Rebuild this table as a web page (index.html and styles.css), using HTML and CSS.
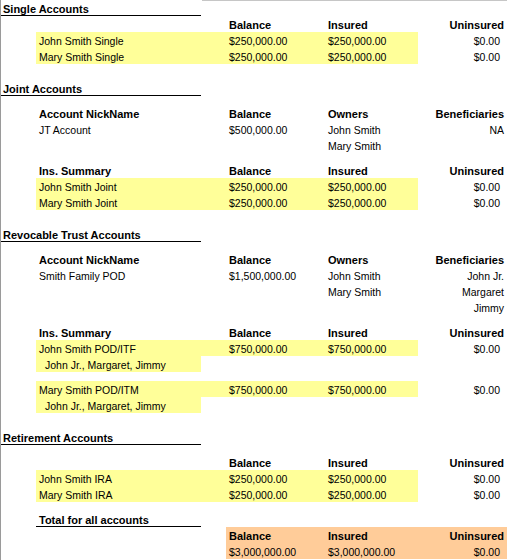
FILE: index.html
```html
<!DOCTYPE html>
<html>
<head>
<meta charset="utf-8">
<link rel="stylesheet" href="styles.css">
</head>
<body>
<div class="sheet">
  <div class="topline"></div>

  <div class="row"><div class="c title">Single Accounts</div></div>
  <div class="row">
    <div class="c d b">Balance</div><div class="c e b">Insured</div><div class="c f b r">Uninsured</div>
  </div>
  <div class="row">
    <div class="c bcol hl">John Smith Single</div><div class="c ccol hl"></div><div class="c d hl">$250,000.00</div><div class="c e hl">$250,000.00</div><div class="c f r money">$0.00</div>
  </div>
  <div class="row">
    <div class="c bcol hl">Mary Smith Single</div><div class="c ccol hl"></div><div class="c d hl">$250,000.00</div><div class="c e hl">$250,000.00</div><div class="c f r money">$0.00</div>
  </div>
  <div class="row"></div>

  <div class="row"><div class="c title">Joint Accounts</div></div>
  <div class="spacer"></div>
  <div class="row">
    <div class="c bcol b">Account NickName</div><div class="c d b">Balance</div><div class="c e b">Owners</div><div class="c f b r">Beneficiaries</div>
  </div>
  <div class="row">
    <div class="c bcol">JT Account</div><div class="c d">$500,000.00</div><div class="c e">John Smith</div><div class="c f r">NA</div>
  </div>
  <div class="row"><div class="c e">Mary Smith</div></div>
  <div class="spacer"></div>
  <div class="row">
    <div class="c bcol b">Ins. Summary</div><div class="c d b">Balance</div><div class="c e b">Insured</div><div class="c f b r">Uninsured</div>
  </div>
  <div class="row">
    <div class="c bcol hl">John Smith Joint</div><div class="c ccol hl"></div><div class="c d hl">$250,000.00</div><div class="c e hl">$250,000.00</div><div class="c f r money">$0.00</div>
  </div>
  <div class="row">
    <div class="c bcol hl">Mary Smith Joint</div><div class="c ccol hl"></div><div class="c d hl">$250,000.00</div><div class="c e hl">$250,000.00</div><div class="c f r money">$0.00</div>
  </div>
  <div class="row"></div>

  <div class="row"><div class="c title">Revocable Trust Accounts</div></div>
  <div class="spacer"></div>
  <div class="row">
    <div class="c bcol b">Account NickName</div><div class="c d b">Balance</div><div class="c e b">Owners</div><div class="c f b r">Beneficiaries</div>
  </div>
  <div class="row">
    <div class="c bcol">Smith Family POD</div><div class="c d">$1,500,000.00</div><div class="c e">John Smith</div><div class="c f r">John Jr.</div>
  </div>
  <div class="row"><div class="c e">Mary Smith</div><div class="c f r">Margaret</div></div>
  <div class="row"><div class="c f r">Jimmy</div></div>
  <div class="spacer"></div>
  <div class="row">
    <div class="c bcol b">Ins. Summary</div><div class="c d b">Balance</div><div class="c e b">Insured</div><div class="c f b r">Uninsured</div>
  </div>
  <div class="row">
    <div class="c bcol hl">John Smith POD/ITF</div><div class="c ccol hl"></div><div class="c d hl">$750,000.00</div><div class="c e hl">$750,000.00</div><div class="c f r money">$0.00</div>
  </div>
  <div class="row"><div class="c bcol hl indent">John Jr., Margaret, Jimmy</div></div>
  <div class="spacer"></div>
  <div class="row">
    <div class="c bcol hl">Mary Smith POD/ITM</div><div class="c ccol hl"></div><div class="c d hl">$750,000.00</div><div class="c e hl">$750,000.00</div><div class="c f r money">$0.00</div>
  </div>
  <div class="row"><div class="c bcol hl indent">John Jr., Margaret, Jimmy</div></div>
  <div class="row"></div>

  <div class="row"><div class="c title">Retirement Accounts</div></div>
  <div class="spacer"></div>
  <div class="row">
    <div class="c d b">Balance</div><div class="c e b">Insured</div><div class="c f b r">Uninsured</div>
  </div>
  <div class="row">
    <div class="c bcol hl">John Smith IRA</div><div class="c ccol hl"></div><div class="c d hl">$250,000.00</div><div class="c e hl">$250,000.00</div><div class="c f r money">$0.00</div>
  </div>
  <div class="row">
    <div class="c bcol hl">Mary Smith IRA</div><div class="c ccol hl"></div><div class="c d hl">$250,000.00</div><div class="c e hl">$250,000.00</div><div class="c f r money">$0.00</div>
  </div>
  <div class="spacer"></div>
  <div class="row"><div class="c bcol b total">Total for all accounts</div></div>
  <div class="row">
    <div class="c d b tot">Balance</div><div class="c e b tot">Insured</div><div class="c f b r tot">Uninsured</div>
  </div>
  <div class="row">
    <div class="c d tot">$3,000,000.00</div><div class="c e tot">$3,000,000.00</div><div class="c f r money tot">$0.00</div>
  </div>
</div>
</body>
</html>
```

FILE: styles.css
```css
html, body {
  margin: 0;
  padding: 0;
  background: #ffffff;
}
body {
  font-family: "Liberation Sans", Arial, sans-serif;
  font-size: 10.5px;
  color: #000000;
  overflow: hidden;
}
.sheet {
  position: relative;
  width: 507px;
  height: 560px;
  box-sizing: border-box;
  border-left: 1px solid #9a9a9a;
  overflow: hidden;
}
.topline {
  position: absolute;
  left: 201px;
  right: 0;
  top: 0;
  height: 1px;
  background: #c6c6c6;
}
.row {
  display: grid;
  grid-template-columns: 35px 165px 25px 99px 93px 89px;
  height: 16px;
}
.spacer {
  height: 9px;
}
.c {
  display: flex;
  align-items: flex-end;
  line-height: 13px;
  padding: 0 3px 0 3px;
  white-space: nowrap;
  box-sizing: border-box;
  height: 16px;
}
.title {
  grid-column: 1 / 3;
  font-weight: bold;
  font-size: 11px;
  line-height: 12px;
  padding-left: 2px;
  border-bottom: 1px solid #000;
  height: 16px;
}
.bcol { grid-column: 2; }
.ccol { grid-column: 3; }
.d { grid-column: 4; }
.e { grid-column: 5; }
.f { grid-column: 6; }
.b { font-weight: bold; font-size: 11px; }
.r { justify-content: flex-end; }
.money { padding-right: 7px; }
.hl { background: #ffff99; }
.tot { background: #ffcc99; }
.indent { padding-left: 9px; }
.total {
  border-bottom: 1px solid #000;
  line-height: 12px;
}
```
